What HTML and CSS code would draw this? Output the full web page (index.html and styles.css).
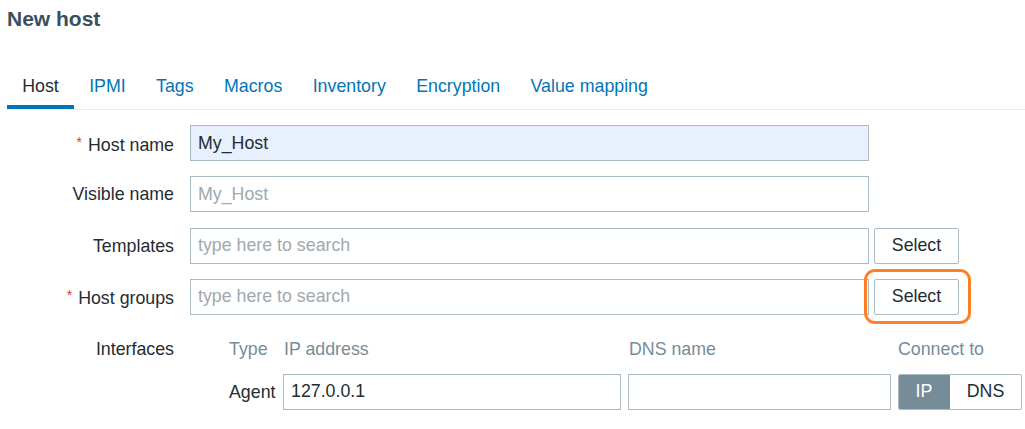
FILE: index.html
```html
<!DOCTYPE html>
<html>
<head>
<meta charset="utf-8">
<link rel="stylesheet" href="styles.css">
</head>
<body>
<div class="page">
  <h1 class="title">New host</h1>
  <ul class="tabs">
    <li class="tab active">Host</li>
    <li class="tab">IPMI</li>
    <li class="tab">Tags</li>
    <li class="tab">Macros</li>
    <li class="tab">Inventory</li>
    <li class="tab">Encryption</li>
    <li class="tab">Value mapping</li>
  </ul>
  <div class="form">
    <div class="row">
      <label class="label"><span class="req">*</span>Host name</label>
      <div class="field"><input class="input autofill" type="text" value="My_Host"></div>
    </div>
    <div class="row">
      <label class="label">Visible name</label>
      <div class="field"><input class="input" type="text" placeholder="My_Host"></div>
    </div>
    <div class="row">
      <label class="label">Templates</label>
      <div class="field"><input class="input" type="text" placeholder="type here to search"><button class="btn">Select</button></div>
    </div>
    <div class="row">
      <label class="label"><span class="req">*</span>Host groups</label>
      <div class="field"><input class="input" type="text" placeholder="type here to search"><span class="highlight"><button class="btn">Select</button></span></div>
    </div>
    <div class="row iface-head">
      <label class="label">Interfaces</label>
      <div class="iface-grid">
        <span class="th">Type</span>
        <span class="th">IP address</span>
        <span class="th">DNS name</span>
        <span class="th">Connect to</span>
      </div>
    </div>
    <div class="row iface-row">
      <span class="label"></span>
      <div class="iface-grid">
        <span class="type">Agent</span>
        <input class="input ip" type="text" value="127.0.0.1">
        <input class="input dns" type="text" value="">
        <div class="toggle"><span class="seg on">IP</span><span class="seg">DNS</span></div>
      </div>
    </div>
  </div>
</div>
</body>
</html>
```
FILE: styles.css
```css
html, body {
  margin: 0;
  padding: 0;
  background: #ffffff;
}
body {
  font-family: "Liberation Sans", Arial, sans-serif;
  font-size: 17.8px;
  color: #1f2c33;
}
.page {
  padding: 7px 0 0 7px;
}
.title {
  margin: 0;
  font-size: 21px;
  line-height: 24px;
  font-weight: bold;
  color: #3a4f5d;
}
.tabs {
  list-style: none;
  margin: 33px 0 0 0;
  padding: 0;
  display: flex;
  border-bottom: 1px solid #ebebeb;
}
.tab {
  padding: 12px 15.2px 9px;
  line-height: 20px;
  color: #0275b8;
  border-bottom: 4px solid transparent;
}
.tab.active {
  color: #1f2c33;
  border-bottom-color: #0275b8;
}
.form {
  margin-top: 15px;
  margin-left: -7px;
  display: flex;
  flex-direction: column;
  gap: 15.33px;
}
.row {
  display: flex;
  align-items: center;
  height: 36px;
}
.label {
  width: 174px;
  text-align: right;
  padding-right: 16px;
  box-sizing: content-box;
  line-height: 20px;
  flex: none;
}
.req {
  color: #e33734;
  font-size: 14px;
  vertical-align: 4px;
  margin-right: 6px;
}
.field {
  display: flex;
  align-items: center;
  gap: 5px;
}
.input {
  box-sizing: border-box;
  height: 36px;
  width: 679px;
  border: 1px solid #acbbc2;
  background: #ffffff;
  padding: 0 7px;
  font-family: "Liberation Sans", Arial, sans-serif;
  font-size: 17.8px;
  color: #1f2c33;
  outline: none;
  margin: 0;
}
.input::placeholder {
  color: #a0a9ad;
}
.input.autofill {
  background: #e8f0fe;
}
.btn {
  box-sizing: border-box;
  height: 36px;
  width: 85px;
  border: 1px solid #acbbc2;
  border-radius: 2px;
  background: #ffffff;
  font-family: "Liberation Sans", Arial, sans-serif;
  font-size: 17.8px;
  color: #1f2c33;
  padding: 0;
  margin: 0;
}
.highlight {
  position: relative;
  display: inline-flex;
}
.highlight::after {
  content: "";
  position: absolute;
  left: -10px;
  top: -10px;
  right: -12px;
  bottom: -9px;
  border: 3.5px solid #ff7f27;
  border-radius: 11px;
  pointer-events: none;
}
.iface-grid {
  display: grid;
  grid-template-columns: 47px 338px 263px 124px;
  column-gap: 7px;
  align-items: center;
  padding-left: 39px;
}
.iface-head {
  margin-top: 1px;
}
.iface-row {
  margin-top: -9px;
}
.th {
  color: #768d99;
  line-height: 20px;
}
.th:nth-child(2), .th:nth-child(3) {
  padding-left: 1px;
}
.type {
  line-height: 20px;
}
.input.ip, .input.dns {
  width: 100%;
}
.toggle {
  display: flex;
  box-sizing: border-box;
  height: 36px;
  border: 1px solid #acbbc2;
  border-radius: 2px;
  overflow: hidden;
}
.seg {
  display: flex;
  align-items: center;
  justify-content: center;
  flex: 1;
  color: #1f2c33;
}
.seg.on {
  flex: none;
  width: 52px;
  margin: -1px 0 -1px -1px;
  background: #768d99;
  color: #ffffff;
}
```
